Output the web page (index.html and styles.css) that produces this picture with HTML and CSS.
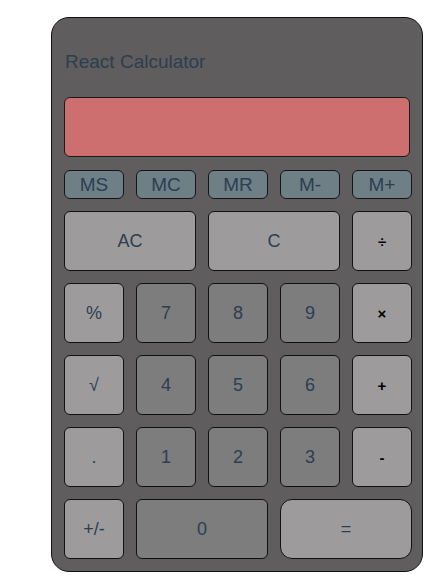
FILE: index.html
```html
<!DOCTYPE html>
<html>
<head>
<meta charset="utf-8">
<link rel="stylesheet" href="styles.css">
</head>
<body>
<div class="calc">
  <h3 class="title">React Calculator</h3>
  <div class="display"></div>
  <div class="memory">
    <button class="mem">MS</button>
    <button class="mem">MC</button>
    <button class="mem">MR</button>
    <button class="mem">M-</button>
    <button class="mem">M+</button>
  </div>
  <div class="keys">
    <button class="key light wide">AC</button>
    <button class="key light wide">C</button>
    <button class="key light op">÷</button>
    <button class="key light">%</button>
    <button class="key dark">7</button>
    <button class="key dark">8</button>
    <button class="key dark">9</button>
    <button class="key light op">×</button>
    <button class="key light">√</button>
    <button class="key dark">4</button>
    <button class="key dark">5</button>
    <button class="key dark">6</button>
    <button class="key light op">+</button>
    <button class="key light">.</button>
    <button class="key dark">1</button>
    <button class="key dark">2</button>
    <button class="key dark">3</button>
    <button class="key light op">-</button>
    <button class="key light">+/-</button>
    <button class="key dark wide">0</button>
    <button class="key light wide eq">=</button>
  </div>
</div>
</body>
</html>
```
FILE: styles.css
```css
* { box-sizing: border-box; }
body {
  margin: 0;
  padding: 17px 0 0 51px;
  background: #ffffff;
  font-family: "Liberation Sans", Arial, sans-serif;
}
.calc {
  width: 372px;
  height: 555px;
  background: #605d5e;
  border: 1px solid #111;
  border-radius: 18px;
  padding: 33px 10px 12px 12px;
}
.title {
  margin: 0 0 24px 1px;
  font-size: 19px;
  line-height: 22px;
  font-weight: normal;
  color: #2c3e50;
}
.display {
  width: 346px;
  height: 60px;
  background: #cd6f6f;
  border: 1px solid #1a1a1a;
  border-radius: 6px;
  margin-bottom: 13px;
}
.memory {
  display: flex;
  gap: 12px;
  margin-bottom: 12px;
}
.mem {
  width: 60px;
  height: 29px;
  background: #6e7f85;
  border: 1px solid #151515;
  border-radius: 6px;
  color: #2c3e50;
  font-family: inherit;
  font-size: 19px;
  padding: 0;
}
.keys {
  display: grid;
  grid-template-columns: repeat(5, 60px);
  grid-auto-rows: 60px;
  gap: 12px;
}
.key {
  border: 1px solid #111;
  border-radius: 6px;
  color: #2c3e50;
  font-family: inherit;
  font-size: 18px;
  padding: 0;
}
.wide { grid-column: span 2; }
.light { background: #9e9b9c; }
.dark { background: #7d7d7d; }
.op {
  color: #000;
  font-size: 15px;
  font-weight: bold;
}
.eq { border-radius: 12px; }
```
